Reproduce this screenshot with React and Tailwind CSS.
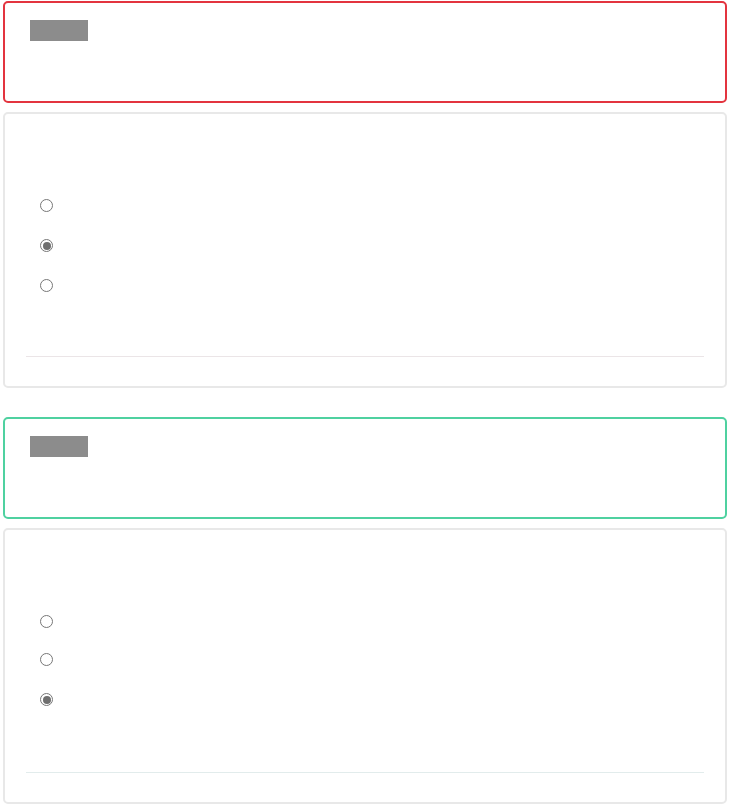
function Radio({ checked }) {
  return (
    <span className="flex h-[13px] w-[13px] items-center justify-center rounded-full border border-[#777] bg-white">
      {checked && <span className="h-[8px] w-[8px] rounded-full bg-[#6f6f6f]" />}
    </span>
  )
}

function Alert({ color }) {
  return (
    <div className={`h-[102px] rounded-[5px] border-2 ${color} bg-white pl-[25px] pt-[17px]`}>
      <div className="h-[21px] w-[58px] bg-[#8c8c8c]" />
    </div>
  )
}

function Question({ selected, rows, line }) {
  return (
    <div className="h-[276px] rounded-[5px] border-2 border-[#e8e8e8] bg-white px-[20px] pt-[85px]">
      <div className="flex h-[94px] flex-col pl-[15px]">
        {rows.map((gap, i) => (
          <div key={i} className="flex h-[13px] items-center" style={{ marginTop: gap }}>
            <Radio checked={i === selected} />
          </div>
        ))}
      </div>
      <div className={`mx-[1px] mt-[63px] h-px ${line}`} />
    </div>
  )
}

export default function App() {
  return (
    <div className="flex w-[730px] flex-col bg-white px-[3px] pt-[1px] font-['Liberation_Sans',sans-serif]">
      <Alert color="border-[#e3343f]" />
      <div className="mt-[9px]">
        <Question selected={1} rows={[0, 27, 27]} line="bg-[#ebe5e7]" />
      </div>
      <div className="mt-[29px]">
        <Alert color="border-[#4fd1a0]" />
      </div>
      <div className="mt-[9px]">
        <Question selected={2} rows={[0, 25, 27]} line="bg-[#e2ecec]" />
      </div>
    </div>
  )
}
